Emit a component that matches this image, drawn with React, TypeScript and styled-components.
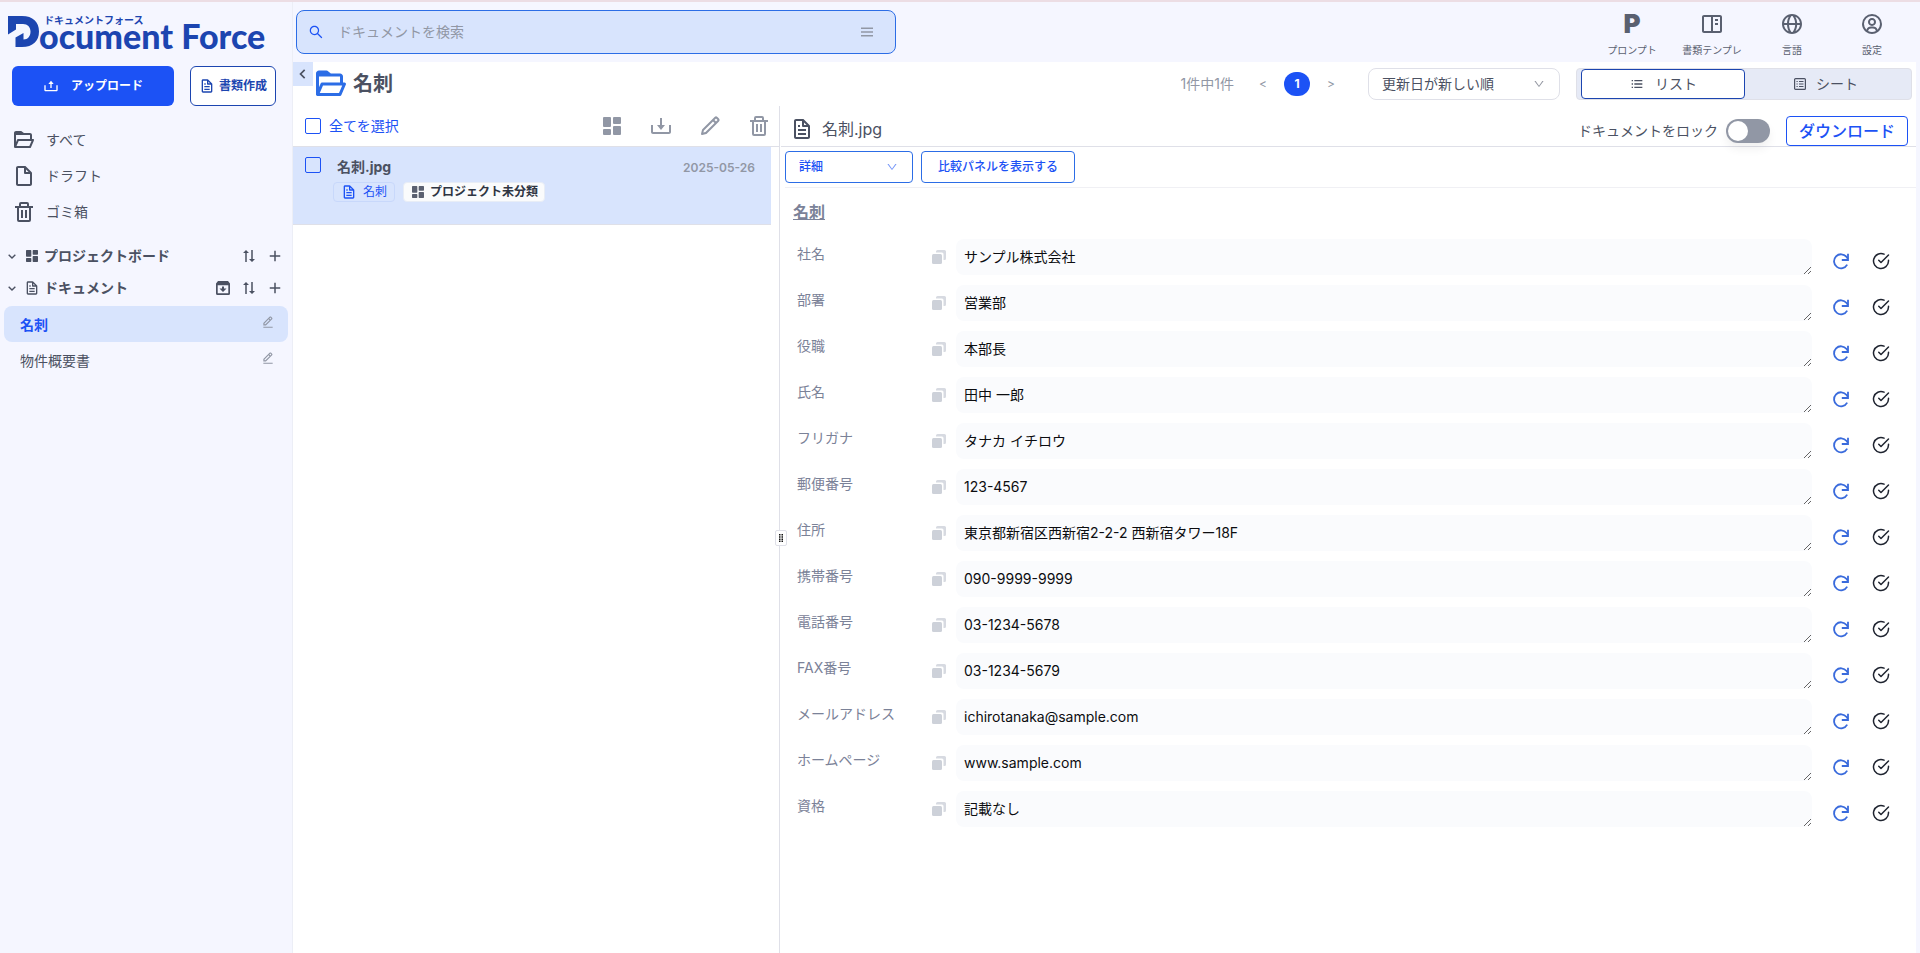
import React, { useState } from 'react';
import styled, { createGlobalStyle, css } from 'styled-components';
import {
  BiBookContent,
  BiChevronDown,
  BiChevronLeft,
  BiDownload,
  BiEditAlt,
  BiFile,
  BiFileBlank,
  BiFolderOpen,
  BiGlobe,
  BiListUl,
  BiMenu,
  BiPencil,
  BiPlus,
  BiSolidDashboard,
  BiSortAlt2,
  BiTrash,
  BiUpload,
  BiUserCircle,
} from 'react-icons/bi';
import { AiOutlineDown, AiOutlineSearch } from 'react-icons/ai';
import { FiCheckCircle } from 'react-icons/fi';

const c = {
  page: '#f5f6ff',
  ink: '#4b5162',
  muted: '#9197a5',
  label: '#7b8298',
  line: '#dfe0e8',
  brand: '#1c52f5',
  navy: '#1c45b0',
  blue: '#2c6de6',
  tint: '#d8e4fd',
};

const GlobalStyle = createGlobalStyle`
  *, *::before, *::after { box-sizing: border-box; }
  body {
    margin: 0;
    background: ${c.page};
    color: ${c.ink};
    font-family: Inter, "Noto Sans CJK JP", sans-serif;
    font-size: 14px;
    line-height: 20px;
  }
  button, input, select, textarea { font: inherit; color: inherit; }
  button { padding: 0; border: 0; background: none; cursor: pointer; }
  svg { flex: none; display: block; }
  h1, h2, h3, p, ul { margin: 0; padding: 0; }
  ul { list-style: none; }
`;

const Page = styled.div`
  display: flex;
  min-height: 100vh;
  border-top: 2px solid #ecdde4;
`;

const Sidebar = styled.aside`
  flex: none;
  width: 293px;
  border-right: 1px solid #eceef6;
`;

const Logo = styled.a`
  display: flex;
  height: 64px;
  padding: 14px 0 0 8px;
  color: ${c.navy};
  text-decoration: none;
`;

const LogoText = styled.span`
  display: flex;
  flex-direction: column;
  font-family: Lato, "Noto Sans CJK JP", sans-serif;
  font-weight: 900;
`;

const LogoRuby = styled.span`
  height: 8px;
  padding-left: 5px;
  font-size: 10px;
  line-height: 8px;
  font-weight: 700;
`;

const LogoName = styled.span`
  font-size: 34px;
  line-height: 24px;
  white-space: nowrap;
`;

const SideActions = styled.div`
  display: flex;
  gap: 16px;
  padding: 0 16px 0 12px;
`;

const UploadButton = styled.button`
  display: flex;
  flex: 1;
  align-items: center;
  justify-content: center;
  gap: 12px;
  height: 40px;
  border-radius: 6px;
  background: ${c.brand};
  color: #fff;
  font-size: 12px;
  font-weight: 700;
`;

const CreateButton = styled.button`
  display: flex;
  align-items: center;
  justify-content: center;
  gap: 4px;
  width: 86px;
  height: 40px;
  border: 1px solid ${c.navy};
  border-radius: 6px;
  background: #fff;
  color: ${c.navy};
  font-size: 12px;
  font-weight: 700;
`;

const NavList = styled.ul`
  padding: 16px 12px 10px;
`;

const NavLink = styled.a`
  display: flex;
  align-items: center;
  gap: 10px;
  height: 36px;
  color: ${c.ink};
  text-decoration: none;
`;

const Section = styled.div`
  display: flex;
  align-items: center;
  height: 32px;
  padding: 0 4px;
  font-weight: 700;
`;

const SectionToggle = styled.button`
  display: flex;
  flex: 1;
  align-items: center;
  gap: 4px;
  font-weight: 700;
`;

const IconButton = styled.button<{ $w?: number }>`
  display: flex;
  align-items: center;
  justify-content: center;
  width: ${(p) => p.$w ?? 26}px;
  height: 26px;
`;

const DocList = styled.ul`
  padding: 2px 4px;
`;

const DocLink = styled.a<{ $active?: boolean }>`
  display: flex;
  justify-content: space-between;
  height: 36px;
  padding: 9px 13px 0 16px;
  border-radius: 8px;
  color: ${c.ink};
  text-decoration: none;
  ${(p) =>
    p.$active &&
    css`
      background: ${c.tint};
      color: ${c.brand};
      font-weight: 700;
    `}

  svg { color: ${c.muted}; }
`;

const Main = styled.div`
  display: flex;
  flex: 1;
  flex-direction: column;
  min-width: 0;
  padding-right: 4px;
`;

const TopBar = styled.header`
  display: flex;
  align-items: flex-start;
  justify-content: space-between;
  height: 60px;
  padding: 8px 0 0 3px;
`;

const SearchBox = styled.label`
  display: flex;
  align-items: center;
  width: 600px;
  height: 44px;
  padding: 0 19px 0 11px;
  border: 1px solid ${c.blue};
  border-radius: 8px;
  background: ${c.tint};
  color: ${c.brand};
`;

const SearchInput = styled.input`
  flex: 1;
  margin-left: 14px;
  padding: 0;
  border: 0;
  outline: 0;
  background: none;
  color: ${c.ink};

  &::placeholder { color: ${c.muted}; opacity: 1; }
`;

const TopNav = styled.nav`
  display: flex;
  padding-right: 4px;
`;

const TopNavItem = styled.button`
  display: flex;
  flex-direction: column;
  align-items: center;
  gap: 4px;
  width: 80px;
  padding-top: 2px;
  color: #5a6070;
  font-size: 10px;
  line-height: 20px;
`;

const LetterIcon = styled.span`
  height: 24px;
  font-size: 26px;
  line-height: 24px;
  font-weight: 900;
`;

const Sheet = styled.main`
  display: flex;
  flex: 1;
  flex-direction: column;
  background: #fff;
`;

const Heading = styled.div`
  display: flex;
  height: 44px;
`;

const Collapse = styled.button`
  display: flex;
  align-items: center;
  justify-content: center;
  width: 20px;
  height: 24px;
  background: ${c.tint};
`;

const FolderTitle = styled.h1`
  display: flex;
  flex: 1;
  align-items: center;
  gap: 4px;
  font-size: 20px;
  font-weight: 700;

  svg { color: ${c.blue}; }
`;

const Pager = styled.nav`
  display: flex;
  align-items: center;
  margin-right: 16px;
  color: ${c.muted};
`;

const PagerCount = styled.span`
  margin-right: 8px;
`;

const PageStep = styled.button`
  width: 42px;
  font-size: 12px;
`;

const PageNumber = styled.button`
  width: 26px;
  height: 24px;
  border-radius: 12px;
  background: ${c.brand};
  color: #fff;
  font-size: 12px;
  font-weight: 700;
`;

const SelectWrap = styled.div<{ $w: number; $blue?: boolean }>`
  display: grid;
  align-items: center;
  width: ${(p) => p.$w}px;
  height: 32px;
  border: 1px solid ${(p) => (p.$blue ? c.blue : c.line)};
  border-radius: ${(p) => (p.$blue ? 4 : 8)}px;
  color: ${(p) => (p.$blue ? c.brand : c.ink)};
  font-size: ${(p) => (p.$blue ? 12 : 14)}px;
  font-weight: ${(p) => (p.$blue ? 500 : 400)};

  > * { grid-area: 1 / 1; }
  select {
    height: 100%;
    padding: 0 13px;
    border: 0;
    outline: 0;
    background: none;
    appearance: none;
  }
  svg {
    justify-self: end;
    margin-right: 14px;
    opacity: 0.6;
    pointer-events: none;
  }
`;

const Segment = styled.div`
  display: flex;
  width: 336px;
  height: 32px;
  margin: 0 4px 0 16px;
  padding: 0 4px;
  border: 1px solid ${c.line};
  border-radius: 4px;
  background: #e6eaf6;
`;

const SegmentButton = styled.button<{ $on?: boolean }>`
  display: flex;
  flex: 1;
  align-items: center;
  justify-content: center;
  gap: 10px;
  border-radius: 4px;
  ${(p) =>
    p.$on &&
    css`
      border: 1px solid ${c.navy};
      background: #fff;
    `}
`;

const HeadingTools = styled.div`
  display: flex;
  align-items: center;
  height: 44px;
`;

const Panes = styled.div`
  display: flex;
  flex: 1;
`;

const ListPane = styled.section`
  width: 486px;
`;

const ListBar = styled.div`
  display: flex;
  align-items: center;
  justify-content: space-between;
  height: 41px;
  padding: 0 8px 0 12px;
  border-bottom: 1px solid ${c.line};
`;

const CheckLabel = styled.label`
  display: flex;
  align-items: center;
  gap: 8px;
  color: ${c.brand};
`;

const Checkbox = styled.input.attrs({ type: 'checkbox' })`
  flex: none;
  width: 16px;
  height: 16px;
  margin: 0;
  border: 1px solid ${c.brand};
  border-radius: 2px;
  appearance: none;

  &:checked { background: ${c.brand}; }
`;

const ListTools = styled.div`
  display: flex;
  gap: 25px;
  color: ${c.muted};
`;

const FileRow = styled.article`
  display: flex;
  gap: 12px;
  height: 78px;
  margin-right: 8px;
  padding: 10px 16px 0 12px;
  border-bottom: 1px solid ${c.line};
  background: ${c.tint};
`;

const FileBody = styled.div`
  flex: 1;
`;

const FileTop = styled.div`
  display: flex;
  justify-content: space-between;
  padding-left: 4px;
  font-weight: 700;
`;

const FileDate = styled.time`
  padding-top: 1px;
  color: ${c.muted};
  font-size: 12px;
  font-weight: 600;
`;

const Tags = styled.div`
  display: flex;
  gap: 8px;
  margin-top: 4px;
`;

const Tag = styled.span<{ $plain?: boolean }>`
  display: flex;
  align-items: center;
  gap: ${(p) => (p.$plain ? 4 : 6)}px;
  height: 20px;
  padding: 0 ${(p) => (p.$plain ? 6 : 7)}px;
  border: 1px solid ${(p) => (p.$plain ? '#e8edf6' : '#c8d8fb')};
  border-radius: 4px;
  background: ${(p) => (p.$plain ? '#fafbfc' : 'transparent')};
  color: ${(p) => (p.$plain ? '#2f3542' : c.brand)};
  font-size: 12px;
  font-weight: ${(p) => (p.$plain ? 700 : 400)};
`;

const Divider = styled.div`
  display: flex;
  align-items: center;
  justify-content: center;
  width: 1px;
  background: ${c.line};
`;

const Grip = styled.button`
  position: relative;
  left: 1px;
  top: 8px;
  display: flex;
  flex: none;
  align-items: center;
  justify-content: center;
  width: 12px;
  height: 16px;
  border: 1px solid ${c.line};
  border-radius: 2px;
  background: #fff;
  color: #111;
`;

const DetailPane = styled.section`
  flex: 1;
  min-width: 0;
`;

const DetailBar = styled.div`
  display: flex;
  align-items: center;
  height: 41px;
  margin-left: 1px;
  padding: 10px 8px 0 9px;
  border-bottom: 1px solid ${c.line};
`;

const FileTitle = styled.h2`
  display: flex;
  flex: 1;
  align-items: center;
  gap: 8px;
  padding-bottom: 4px;
  font-size: 16px;
  font-weight: 400;
`;

const LockLabel = styled.label`
  display: flex;
  align-items: center;
  gap: 8px;
  margin-right: 16px;
`;

const Toggle = styled.input.attrs({ type: 'checkbox', role: 'switch' })`
  display: flex;
  width: 44px;
  height: 24px;
  margin: 0;
  padding: 2px;
  border-radius: 12px;
  background: ${c.muted};
  box-shadow: 0 6px 10px rgba(0, 0, 0, 0.06);
  appearance: none;

  &::before {
    content: '';
    width: 20px;
    height: 20px;
    border-radius: 50%;
    background: #fff;
  }
  &:checked { justify-content: flex-end; background: ${c.brand}; }
`;

const OutlineButton = styled.button<{ $w: number; $big?: boolean }>`
  width: ${(p) => p.$w}px;
  height: ${(p) => (p.$big ? 30 : 32)}px;
  border: 1px solid ${(p) => (p.$big ? c.brand : c.blue)};
  border-radius: 4px;
  background: #fff;
  color: ${c.brand};
  font-size: ${(p) => (p.$big ? 16 : 12)}px;
  font-weight: 500;
`;

const DetailTools = styled.div`
  display: flex;
  gap: 8px;
  margin-left: 5px;
  padding: 4px 0;
  border-bottom: 1px solid #f0f0f4;
`;

const Fields = styled.div`
  padding: 12px 22px 0 13px;
`;

const FieldsTitle = styled.h3`
  margin-bottom: 15px;
  color: ${c.label};
  font-size: 16px;
  line-height: 24px;
  font-weight: 700;
  text-decoration: underline;
`;

const FieldRow = styled.div`
  display: flex;
  height: 36px;
  margin-bottom: 10px;
`;

const FieldLabel = styled.label`
  width: 139px;
  padding: 5px 0 0 4px;
  color: ${c.label};
`;

const CopyButton = styled.button`
  width: 24px;
  height: 14px;
  margin-top: 11px;
  color: #cdd1d9;
`;

const FieldText = styled.textarea`
  display: block;
  flex: 1;
  height: 36px;
  padding: 8px 8px 6px;
  border: 0;
  border-radius: 8px;
  outline: 0;
  background: #fafbfd;
  color: #0c0d10;
  resize: vertical;
`;

const RowActions = styled.div`
  display: flex;
  gap: 22px;
  padding: 13px 4px 0 20px;
`;

const RowAction = styled.button<{ $color: string }>`
  width: 18px;
  height: 18px;
  color: ${(p) => p.$color};
`;

const LogoMark = () => (
  <svg width="31" height="32" viewBox="0 0 31 32" fill="currentColor" aria-hidden="true">
    <path d="M0 0H14C25 0 31 6 31 15.500S25 31 14 31H7.500V21.500L15.500 17V23.500C20 23.500 22.500 20 22.500 15.500S19.500 8 15 8H8V13.500L0 18.500Z" />
  </svg>
);

const ArchiveIcon = () => (
  <svg width="14" height="14" viewBox="0 0 14 14" fill="currentColor" aria-hidden="true">
    <path
      fillRule="evenodd"
      d="M2 0H12L14 2.500V12.500A1.500 1.500 0 0 1 12.500 14H1.500A1.500 1.500 0 0 1 0 12.500V2.500ZM1.700 4.200V12.300H12.300V4.200Z"
    />
    <path d="M6 5.500H8V7.500H10.500L7 11L3.500 7.500H6Z" />
  </svg>
);

const CopyIcon = () => (
  <svg width="14" height="14" viewBox="0 0 14 14" fill="currentColor" aria-hidden="true">
    <rect x="0" y="4" width="10" height="10" rx="1.5" />
    <path d="M4 1.500A1.500 1.500 0 0 1 5.500 0H12.500A1.500 1.500 0 0 1 14 1.500V8.500A1.500 1.500 0 0 1 12.500 10H11.500V4A1.500 1.500 0 0 0 10 2.500H4Z" opacity=".8" />
  </svg>
);

const ReloadIcon = () => (
  <svg width="18" height="18" viewBox="0 0 18 18" fill="none" stroke="currentColor" strokeWidth="1.800" aria-hidden="true">
    <path d="M15.200 12.600A7 7 0 1 1 14.600 5L16 7" />
    <path d="M16 1.800V8H9.800" />
  </svg>
);

const SheetIcon = () => (
  <svg width="12" height="12" viewBox="0 0 12 12" fill="none" stroke="currentColor" strokeWidth="1.2" aria-hidden="true">
    <rect x=".6" y=".6" width="10.800" height="10.800" rx="1" />
    <path d="M2.500 3.500h1.200M2.500 6h1.200M2.500 8.500h1.200M5 3.500h4.500M5 6h4.500M5 8.500h4.500" />
  </svg>
);

const GripIcon = () => (
  <svg width="4" height="8" viewBox="0 0 4 8" fill="currentColor" aria-hidden="true">
    <path d="M0 0h1.500v1.500H0zM2.500 0H4v1.500H2.500zM0 2.200h1.500v1.500H0zM2.500 2.200H4v1.500H2.500zM0 4.400h1.500v1.500H0zM2.500 4.400H4v1.500H2.500zM0 6.500h1.500V8H0zM2.500 6.500H4V8H2.500z" />
  </svg>
);

const fields: [string, string][] = [
  ['社名', 'サンプル株式会社'],
  ['部署', '営業部'],
  ['役職', '本部長'],
  ['氏名', '田中 一郎'],
  ['フリガナ', 'タナカ イチロウ'],
  ['郵便番号', '123-4567'],
  ['住所', '東京都新宿区西新宿2-2-2 西新宿タワー18F'],
  ['携帯番号', '090-9999-9999'],
  ['電話番号', '03-1234-5678'],
  ['FAX番号', '03-1234-5679'],
  ['メールアドレス', 'ichirotanaka@sample.com'],
  ['ホームページ', 'www.sample.com'],
  ['資格', '記載なし'],
];

const Field = ({ id, label, value }: { id: string; label: string; value: string }) => (
  <FieldRow>
    <FieldLabel htmlFor={id}>{label}</FieldLabel>
    <CopyButton aria-label={`${label}をコピー`}>
      <CopyIcon />
    </CopyButton>
    <FieldText id={id} defaultValue={value} rows={1} spellCheck={false} />
    <RowActions>
      <RowAction $color="#3a6bdc" aria-label={`${label}を再取得`}>
        <ReloadIcon />
      </RowAction>
      <RowAction $color="#1f2430" aria-label={`${label}を確認済みにする`}>
        <FiCheckCircle size={18} />
      </RowAction>
    </RowActions>
  </FieldRow>
);

export default function App() {
  const [view, setView] = useState<'list' | 'sheet'>('list');

  return (
    <>
      <GlobalStyle />
      <Page>
        <Sidebar>
          <Logo href="#" aria-label="Document Force">
            <LogoMark />
            <LogoText>
              <LogoRuby>ドキュメントフォース</LogoRuby>
              <LogoName>ocument Force</LogoName>
            </LogoText>
          </Logo>
          <SideActions>
            <UploadButton>
              <BiUpload size={16} />
              アップロード
            </UploadButton>
            <CreateButton>
              <BiFile size={16} />
              書類作成
            </CreateButton>
          </SideActions>
          <NavList>
            <li><NavLink href="#"><BiFolderOpen size={24} />すべて</NavLink></li>
            <li><NavLink href="#"><BiFileBlank size={24} />ドラフト</NavLink></li>
            <li><NavLink href="#"><BiTrash size={24} />ゴミ箱</NavLink></li>
          </NavList>
          <Section>
            <SectionToggle>
              <BiChevronDown size={16} stroke="currentColor" />
              <BiSolidDashboard size={16} />
              プロジェクトボード
            </SectionToggle>
            <IconButton aria-label="並び替え"><BiSortAlt2 size={18} /></IconButton>
            <IconButton aria-label="追加"><BiPlus size={18} /></IconButton>
          </Section>
          <Section>
            <SectionToggle>
              <BiChevronDown size={16} stroke="currentColor" />
              <BiFile size={16} />
              ドキュメント
            </SectionToggle>
            <IconButton aria-label="アーカイブ"><ArchiveIcon /></IconButton>
            <IconButton aria-label="並び替え"><BiSortAlt2 size={18} /></IconButton>
            <IconButton aria-label="追加"><BiPlus size={18} /></IconButton>
          </Section>
          <DocList>
            <li><DocLink href="#" $active>名刺<BiEditAlt size={14} /></DocLink></li>
            <li><DocLink href="#">物件概要書<BiEditAlt size={14} /></DocLink></li>
          </DocList>
        </Sidebar>

        <Main>
          <TopBar>
            <SearchBox>
              <AiOutlineSearch size={16} />
              <SearchInput placeholder="ドキュメントを検索" aria-label="ドキュメントを検索" />
              <BiMenu size={18} color={c.muted} />
            </SearchBox>
            <TopNav>
              <TopNavItem><LetterIcon aria-hidden="true">P</LetterIcon>プロンプト</TopNavItem>
              <TopNavItem><BiBookContent size={24} />書類テンプレ</TopNavItem>
              <TopNavItem><BiGlobe size={24} />言語</TopNavItem>
              <TopNavItem><BiUserCircle size={24} />設定</TopNavItem>
            </TopNav>
          </TopBar>

          <Sheet>
            <Heading>
              <Collapse aria-label="サイドバーを閉じる"><BiChevronLeft size={20} /></Collapse>
              <FolderTitle><BiFolderOpen size={36} />名刺</FolderTitle>
              <HeadingTools>
                <Pager aria-label="ページ">
                  <PagerCount>1件中1件</PagerCount>
                  <PageStep>&lt;</PageStep>
                  <PageNumber>1</PageNumber>
                  <PageStep>&gt;</PageStep>
                </Pager>
                <SelectWrap $w={192}>
                  <select aria-label="並び順"><option>更新日が新しい順</option></select>
                  <AiOutlineDown size={12} />
                </SelectWrap>
                <Segment>
                  <SegmentButton $on={view === 'list'} onClick={() => setView('list')}>
                    <BiListUl size={16} />リスト
                  </SegmentButton>
                  <SegmentButton $on={view === 'sheet'} onClick={() => setView('sheet')}>
                    <SheetIcon />シート
                  </SegmentButton>
                </Segment>
              </HeadingTools>
            </Heading>

            <Panes>
              <ListPane>
                <ListBar>
                  <CheckLabel><Checkbox />全てを選択</CheckLabel>
                  <ListTools>
                    <IconButton $w={24} aria-label="プロジェクト"><BiSolidDashboard size={24} /></IconButton>
                    <IconButton $w={24} aria-label="ダウンロード"><BiDownload size={24} /></IconButton>
                    <IconButton $w={24} aria-label="編集"><BiPencil size={24} /></IconButton>
                    <IconButton $w={24} aria-label="削除"><BiTrash size={24} /></IconButton>
                  </ListTools>
                </ListBar>
                <FileRow>
                  <Checkbox aria-label="名刺.jpgを選択" />
                  <FileBody>
                    <FileTop>
                      名刺.jpg
                      <FileDate>2025-05-26</FileDate>
                    </FileTop>
                    <Tags>
                      <Tag><BiFile size={16} />名刺</Tag>
                      <Tag $plain><BiSolidDashboard size={16} color="#5a6070" />プロジェクト未分類</Tag>
                    </Tags>
                  </FileBody>
                </FileRow>
              </ListPane>

              <Divider>
                <Grip aria-label="幅を変更"><GripIcon /></Grip>
              </Divider>

              <DetailPane>
                <DetailBar>
                  <FileTitle><BiFile size={24} />名刺.jpg</FileTitle>
                  <LockLabel>ドキュメントをロック<Toggle /></LockLabel>
                  <OutlineButton $w={122} $big>ダウンロード</OutlineButton>
                </DetailBar>
                <DetailTools>
                  <SelectWrap $w={128} $blue>
                    <select aria-label="表示内容"><option>詳細</option></select>
                    <AiOutlineDown size={12} />
                  </SelectWrap>
                  <OutlineButton $w={154}>比較パネルを表示する</OutlineButton>
                </DetailTools>
                <Fields>
                  <FieldsTitle>名刺</FieldsTitle>
                  {fields.map(([label, value], i) => (
                    <Field key={label} id={`field-${i}`} label={label} value={value} />
                  ))}
                </Fields>
              </DetailPane>
            </Panes>
          </Sheet>
        </Main>
      </Page>
    </>
  );
}
